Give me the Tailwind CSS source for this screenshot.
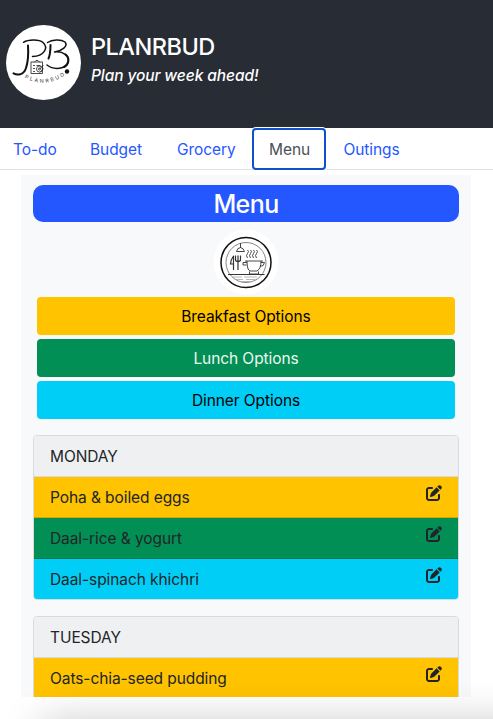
<!DOCTYPE html>
<html lang="en">
<head>
<meta charset="utf-8">
<title>PLANRBUD</title>
<script src="https://cdn.jsdelivr.net/npm/@tailwindcss/browser@4"></script>
</head>
<body class="bg-white">
<svg class="hidden">
  <symbol id="edit" viewBox="0 0 512 512"><path d="M471.6 21.7c-21.9-21.9-57.3-21.9-79.2 0L362.3 51.7l97.9 97.9 30.1-30.1c21.9-21.9 21.9-57.3 0-79.2L471.6 21.7zm-299.2 220c-6.1 6.1-10.8 13.6-13.5 21.9l-29.6 88.8c-2.9 8.6-.6 18.1 5.8 24.6s15.9 8.7 24.6 5.8l88.8-29.6c8.2-2.7 15.7-7.4 21.9-13.5L437.7 172.3 339.7 74.3 172.4 241.7zM96 64C43 64 0 107 0 160V416c0 53 43 96 96 96H352c53 0 96-43 96-96V320c0-17.7-14.3-32-32-32s-32 14.3-32 32v96c0 17.7-14.3 32-32 32H96c-17.7 0-32-14.3-32-32V160c0-17.7 14.3-32 32-32h96c17.7 0 32-14.3 32-32s-14.3-32-32-32H96z"/></symbol>
</svg>
<div class="relative h-[719px] w-[493px] overflow-hidden font-[Inter,'Liberation_Sans',sans-serif] text-[15.5px] leading-[26px] tracking-[-0.08px] text-[#212529]">
  <header class="flex h-32 bg-[#282c34] pt-[25px] pl-1.5 text-white">
    <svg class="size-[75px] shrink-0" viewBox="0 0 75 75" fill="none">
      <circle cx="37.5" cy="37.5" r="37.5" fill="#fff"/>
      <g stroke="#111" stroke-linecap="round" stroke-linejoin="round">
        <path d="M17.500 17.300C22 14.500 33 14 37 17.500C43 23 38 31 26.500 31.500" stroke-width="1.500"/>
        <path d="M22 20.500C22.500 28 22 37 20 43C18 49.500 12 51 7.500 48.300" stroke-width="2"/>
        <path d="M44.500 20C44.500 25 44.500 29 42.500 33.500" stroke-width="2"/>
        <path d="M41.500 17.500C46 14.500 55 14 59 17C62.500 21 56 26 48.500 27C57 26 64 31 62 37.500C60 44 48 45.500 41 40" stroke-width="1.500"/>
        <path d="M59.500 29.500C64 33 63 39.500 58 42" stroke-width="2"/>
      </g>
      <g stroke="#222" stroke-width=".8">
        <rect x="25" y="37" width="11.500" height="11.500"/>
        <path d="M28 37.500L30 35.500h2l2 2M27 40.500h2M30.500 40.500h4M27 43.500h2M27 46.500h2"/>
        <circle cx="33.500" cy="44" r="3"/><circle cx="33.500" cy="44" r="1"/>
        <path d="M33.500 44L37.500 40M34 47.500l3.500-4"/>
      </g>
      <circle cx="61" cy="46.500" r="2.200" fill="#111"/>
      <path id="arc" d="M18.500 52.500Q40 65 62 48"/>
      <text class="text-[5.200px] tracking-[2.100px]" fill="#333"><textPath href="#arc">PLANRBUD</textPath></text>
    </svg>
    <div class="ml-2.5 pt-[7px]">
      <h1 class="text-[23.500px] font-medium leading-[30px] tracking-[-0.500px]">PLANRBUD</h1>
      <p class="mt-[1px] font-medium italic tracking-[-0.100px]">Plan your week ahead!</p>
    </div>
  </header>
  <nav class="flex h-[42px] border-b border-[#dee2e6] pt-[9px] text-[#2457ff]">
    <a class="w-[73px] pl-[13px]">To-do</a>
    <a class="w-[87px] pl-[17px]">Budget</a>
    <a class="w-[92px] pl-[17px]">Grocery</a>
    <a class="z-10 -mt-[9px] h-[42px] w-[74px] rounded-[4px] border-2 border-[#0f51cb] bg-white pt-[7px] pl-[15px] text-[#495057] shadow-[0_0_0_1px_#fff]">Menu</a>
    <a class="pl-[17.500px]">Outings</a>
  </nav>
  <main class="mt-[5px] ml-[21px] h-[522px] w-[450px] overflow-hidden bg-[#f8f9fb] px-3 pt-2.5">
    <h2 class="h-[37px] rounded-[10px] bg-[#2457ff] text-center text-[25px] font-medium leading-[39px] tracking-[-0.600px] text-white">Menu</h2>
    <svg class="mx-auto mt-[7px] block size-[66px]" viewBox="0 0 66 66" fill="none">
      <circle cx="33" cy="33" r="32.500" fill="#fff"/>
      <circle cx="33" cy="33.500" r="25" stroke="#111" stroke-width="1.500"/>
      <circle cx="33" cy="33.500" r="20" stroke="#777" stroke-width=".9"/>
      <g stroke="#333" stroke-width=".9" stroke-linejoin="round">
        <path d="M27.500 14v5M23.500 22.500Q24 19 27.500 18.500Q30.500 19 31.500 22.500Z" fill="#fff"/>
        <path d="M20.500 41V27Q17.500 31 17.500 35H20.500" stroke-width="1.200"/>
        <path d="M22.500 26.500v4q0 2 2.500 2t2.500-2v-4M25 26.500V41" stroke-width="1.200"/>
        <path d="M34.500 21q2 1.500 0 3.500t0 4.500M37.500 21q2 1.500 0 3.500t0 4.500M40.500 21q2 1.500 0 3.500t0 4.500M43.500 21q2 1.500 0 3.500t0 4.500"/>
        <path d="M32 32H50M34 32Q34 41 37 42H44Q48 40 48 32M48 33.500h3.500q-.5 4-4.500 4M34 33.500h-4v2.500h3.500M36.500 45h9M36.500 42.500v2.500M45.500 42.500v2.500"/>
        <path d="M15 45.500H51.500" stroke-width="1.100"/>
        <path d="M20 48h9M31 48h13M24 50.500h6M33 50.500h9M29 52.500h8" stroke="#999" stroke-width=".7"/>
      </g>
    </svg>
    <div class="mx-1 mt-[2px] flex flex-col gap-1 text-center text-black">
      <button class="h-[38px] rounded-[4px] bg-[#ffc300] pt-0.5">Breakfast Options</button>
      <button class="h-[38px] rounded-[4px] bg-[#028f55] pt-0.5 text-[#edf7f2]">Lunch Options</button>
      <button class="h-[38px] rounded-[4px] bg-[#00cef7] pt-0.5">Dinner Options</button>
    </div>
    <section class="mt-4 overflow-hidden rounded-[4px] border border-[#d9dbde]">
      <h3 class="h-[41px] border-b border-[#d8dadd] bg-[#eff0f2] px-4 py-2">MONDAY</h3>
      <div class="flex h-[41px] justify-between border-b border-black/15 bg-[#ffc300] px-4 py-2"><span>Poha &amp; boiled eggs</span><svg class="size-4" fill="#212529"><use href="#edit"/></svg></div>
      <div class="flex h-[41px] justify-between border-b border-black/15 bg-[#028f55] px-4 py-2"><span>Daal-rice &amp; yogurt</span><svg class="size-4" fill="#212529"><use href="#edit"/></svg></div>
      <div class="flex h-10 justify-between bg-[#00cef7] px-4 py-2"><span>Daal-spinach khichri</span><svg class="size-4" fill="#212529"><use href="#edit"/></svg></div>
    </section>
    <section class="mt-4 overflow-hidden rounded-[4px] border border-[#d9dbde]">
      <h3 class="h-[41px] border-b border-[#d8dadd] bg-[#eff0f2] px-4 py-2">TUESDAY</h3>
      <div class="flex h-[41px] justify-between bg-[#ffc300] px-4 py-2"><span>Oats-chia-seed pudding</span><svg class="size-4" fill="#212529"><use href="#edit"/></svg></div>
    </section>
  </main>
  <div class="absolute top-[722px] left-[42px] h-20 w-[520px] shadow-[0_0_40px_rgba(0,0,0,0.22)]"></div>
</div>
</body>
</html>
